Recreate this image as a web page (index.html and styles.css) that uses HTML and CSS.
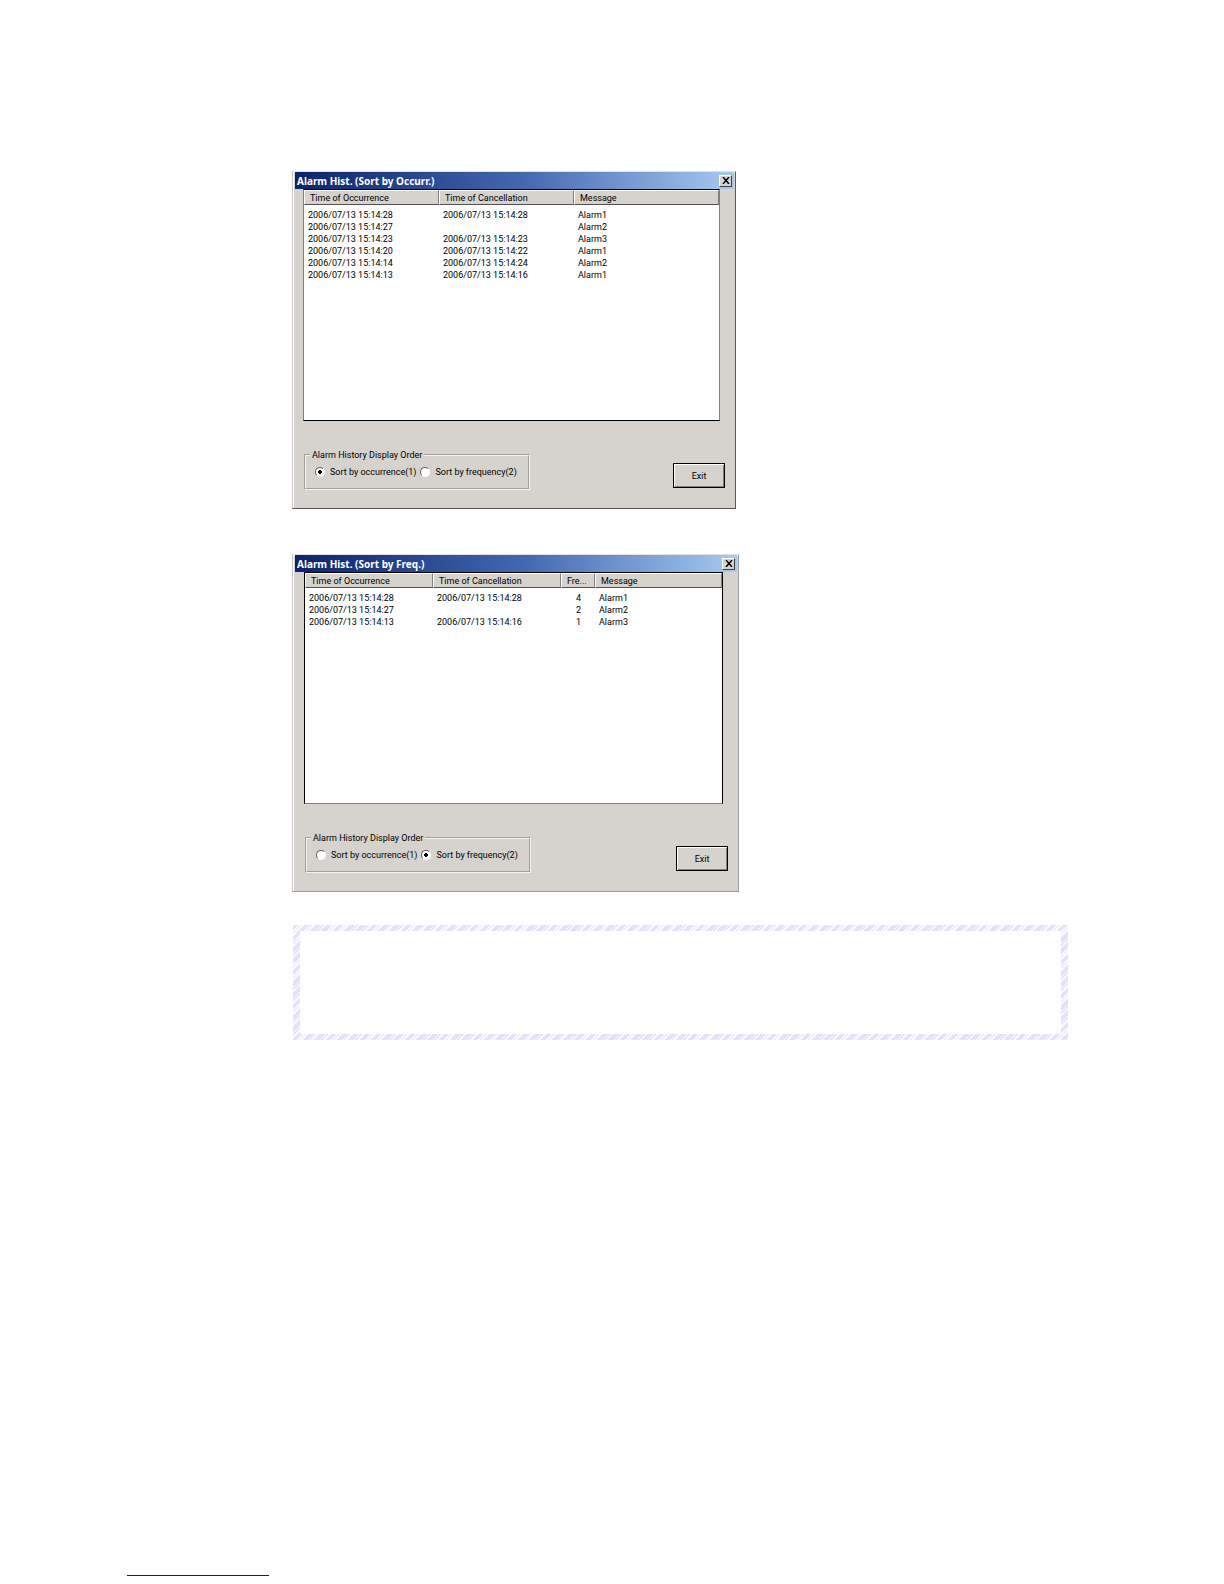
FILE: index.html
```html
<!DOCTYPE html>
<html lang="en">
<head>
  <meta charset="UTF-8">
  <title>Alarm History</title>
  <meta name="viewport" content="width=device-width, initial-scale=1">
  <link rel="stylesheet" href="styles.css">
</head>
<body>

<main>
  <section class="window" aria-labelledby="occ-title">
    <header class="titlebar">
      <h2 id="occ-title">Alarm Hist. (Sort by Occurr.)</h2>
      <button class="close" aria-label="Close">
        <svg width="8" height="7" viewBox="0 0 8 7" aria-hidden="true"><path d="M1 0l6 7M7 0L1 7" stroke="#000" stroke-width="1.5"/></svg>
      </button>
    </header>
    <div class="list">
      <table>
        <colgroup><col class="time"><col class="time"><col></colgroup>
        <thead>
          <tr><th scope="col">Time of Occurrence</th><th scope="col">Time of Cancellation</th><th scope="col">Message</th></tr>
        </thead>
        <tbody>
          <tr><td>2006/07/13 15:14:28</td><td>2006/07/13 15:14:28</td><td>Alarm1</td></tr>
          <tr><td>2006/07/13 15:14:27</td><td></td><td>Alarm2</td></tr>
          <tr><td>2006/07/13 15:14:23</td><td>2006/07/13 15:14:23</td><td>Alarm3</td></tr>
          <tr><td>2006/07/13 15:14:20</td><td>2006/07/13 15:14:22</td><td>Alarm1</td></tr>
          <tr><td>2006/07/13 15:14:14</td><td>2006/07/13 15:14:24</td><td>Alarm2</td></tr>
          <tr><td>2006/07/13 15:14:13</td><td>2006/07/13 15:14:16</td><td>Alarm1</td></tr>
        </tbody>
      </table>
    </div>
    <div class="controls">
      <fieldset>
        <legend>Alarm History Display Order</legend>
        <label><input type="radio" name="order1" checked>Sort by occurrence(1)</label>
        <label><input type="radio" name="order1">Sort by frequency(2)</label>
      </fieldset>
      <button class="exit">Exit</button>
    </div>
  </section>

  <section class="window by-freq" aria-labelledby="freq-title">
    <header class="titlebar">
      <h2 id="freq-title">Alarm Hist. (Sort by Freq.)</h2>
      <button class="close" aria-label="Close">
        <svg width="8" height="7" viewBox="0 0 8 7" aria-hidden="true"><path d="M1 0l6 7M7 0L1 7" stroke="#000" stroke-width="1.5"/></svg>
      </button>
    </header>
    <div class="list">
      <table>
        <colgroup><col class="time"><col class="time"><col class="freq"><col></colgroup>
        <thead>
          <tr><th scope="col">Time of Occurrence</th><th scope="col">Time of Cancellation</th><th scope="col" class="short">Fre...</th><th scope="col">Message</th></tr>
        </thead>
        <tbody>
          <tr><td>2006/07/13 15:14:28</td><td>2006/07/13 15:14:28</td><td class="num">4</td><td>Alarm1</td></tr>
          <tr><td>2006/07/13 15:14:27</td><td></td><td class="num">2</td><td>Alarm2</td></tr>
          <tr><td>2006/07/13 15:14:13</td><td>2006/07/13 15:14:16</td><td class="num">1</td><td>Alarm3</td></tr>
        </tbody>
      </table>
    </div>
    <div class="controls">
      <fieldset>
        <legend>Alarm History Display Order</legend>
        <label><input type="radio" name="order2">Sort by occurrence(1)</label>
        <label><input type="radio" name="order2" checked>Sort by frequency(2)</label>
      </fieldset>
      <button class="exit">Exit</button>
    </div>
  </section>

  <aside class="note"></aside>
</main>

<footer>
  <a href="#occ-title" aria-label="Back to top"></a>
</footer>

</body>
</html>
```
FILE: styles.css
```css
:root {
  --face:   #D6D3CE;
  --shadow: #808080;
  --dark:   #5A5A5A;
  --stripe: #E2E2F8;
}

* { box-sizing: border-box; }

body {
  margin: 0;
  min-height: 100vh;
  display: flex; flex-direction: column;
  background: #FFF;
  color: #000;
  font: 9px/12px Roboto, 'Liberation Sans', sans-serif;
}

main { padding: 171px 156px 0 292px; }

button { font: inherit; color: inherit; }

.window {
  width: 444px; max-width: 100%;
  margin-bottom: 45px;
  padding: 0 0 18px;
  background: var(--face);
  border: 1px solid var(--dark);
  border-top-color: #E4E2DE;
  border-left-color: #C8C6C2;
  box-shadow: inset 1px 1px #FFF;
}

.by-freq {
  width: 447px;
  margin-bottom: 33px;
  border-right-color: #A0A0A0;
  border-bottom-color: #A0A0A0;
}

.titlebar {
  display: flex; align-items: center;
  justify-content: space-between;
  height: 17px;
  margin: 0 1px 0 2px;
  padding: 0 2px;
  background: linear-gradient(to right, #0A246A, #4468B0 52%, #A6CAF0);
}

.titlebar h2 {
  margin: 0;
  color: #FFF;
  font: bold 10px/16px 'Noto Sans', sans-serif;
  white-space: nowrap;
}

.close {
  display: flex; align-items: center; justify-content: center;
  width: 13px; height: 12px;
  padding: 0;
  background: var(--face);
  border: 1px solid;
  border-color: #FFF #404040 #404040 #FFF;
}

.list {
  height: 232px;
  margin: 0 15px 0 10px;
  background: #FFF;
  border: 1px solid #000;
  border-left-color: var(--shadow);
  border-right-color: var(--shadow);
}

.by-freq .list {
  margin-left: 11px;
  border-color: #000 #000 var(--shadow) #000;
}

table {
  width: 100%;
  table-layout: fixed;
  border-collapse: separate; border-spacing: 0;
}

.time { width: 135px; }
.by-freq .time { width: 128px; }
.freq { width: 34px; }

th, td {
  text-align: left;
  font-weight: normal;
  white-space: nowrap;
}

th {
  height: 15px;
  padding: 0 5px;
  background: var(--face);
  border: 1px solid;
  border-color: #FFF var(--shadow) #505050 #FFF;
}

td { height: 12px; padding: 0 4px; }

tbody tr:first-child td { height: 16px; padding-top: 4px; }

th.short { padding-right: 0; }

td.num { padding-right: 14px; text-align: right; }

.controls {
  display: flex; align-items: flex-end;
  justify-content: space-between;
  margin: 28px 10px 0 11px;
}

.by-freq .controls { margin-left: 12px; }

fieldset {
  display: flex; align-items: center; gap: 4px;
  width: 226px; height: 41px;
  margin: 0; padding: 0 0 5px 9px;
  border: 2px groove #F4F2EE;
}

legend { margin-left: -5px; padding: 0 2px; }

label {
  display: flex; align-items: center; gap: 5px;
  white-space: nowrap;
}

input[type="radio"] {
  appearance: none;
  width: 10px; height: 10px;
  margin: 0;
  border: 1px solid;
  border-color: #606060 #FFF #FFF #606060;
  border-radius: 50%;
  background: #FFF;
}

input[type="radio"]:checked {
  background: radial-gradient(circle, #000 2px, #FFF 2px);
}

.exit {
  width: 52px; height: 25px;
  margin-bottom: 2px;
  padding: 0;
  background: var(--face);
  border: 1px solid #000;
  box-shadow: inset 1px 1px #FFF, inset -1px -1px var(--shadow);
}

.note {
  height: 115px;
  margin-left: 1px;
  padding: 6px 7px;
  background:
    linear-gradient(#FFF, #FFF) content-box,
    repeating-linear-gradient(135deg, var(--stripe) 0 4px, #FAFAFF 4px 5px, var(--stripe) 5px 6px, #FAFAFF 6px 8px);
}

footer {
  margin-top: auto;
  padding: 0 127px 8px;
}

footer a {
  display: block;
  width: 142px;
  border-bottom: 1px solid #10109A;
}
```
